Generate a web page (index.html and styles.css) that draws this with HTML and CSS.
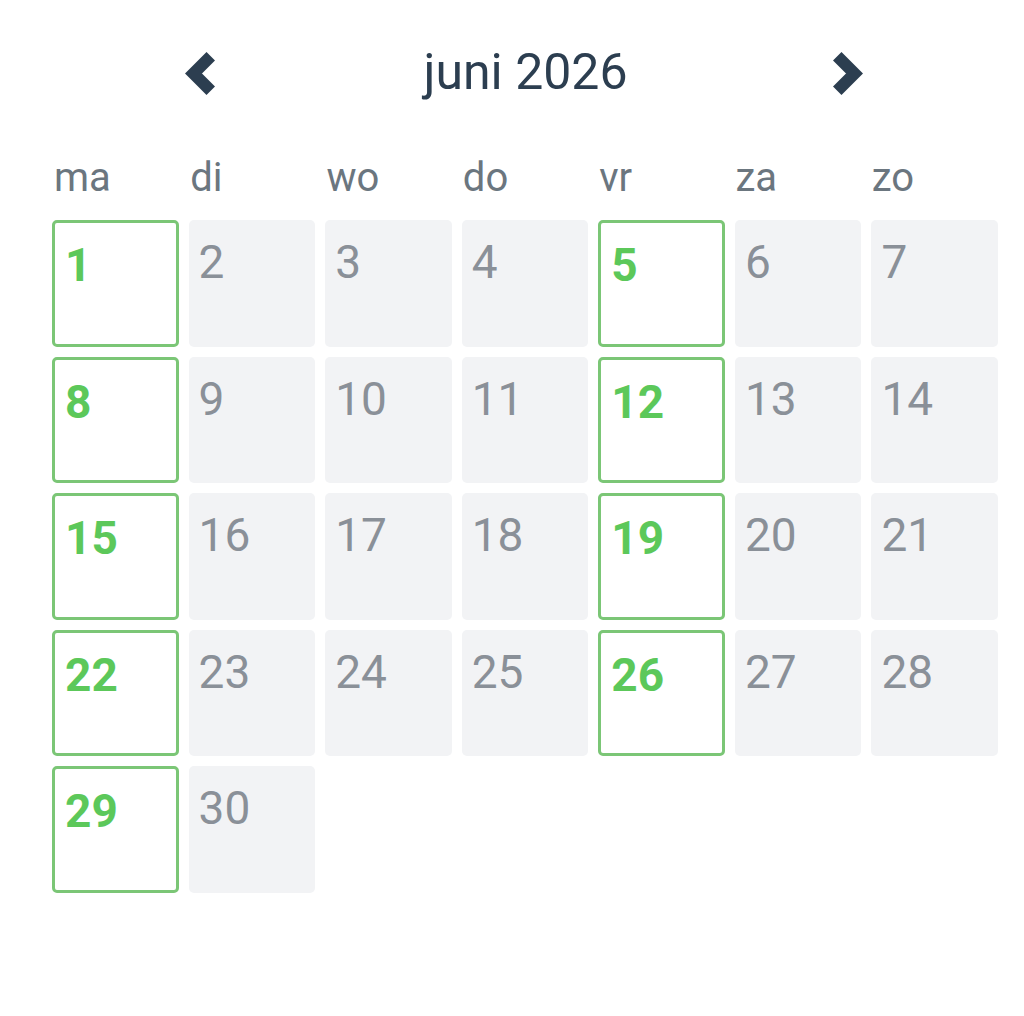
FILE: index.html
```html
<!DOCTYPE html>
<html lang="nl">
<head>
<meta charset="utf-8">
<title>juni 2026</title>
<link rel="stylesheet" href="styles.css">
</head>
<body>
<div class="calendar">
  <div class="header">
    <button class="nav" aria-label="vorige maand">
      <svg width="30" height="43" viewBox="0 0 30 43"><polyline points="25.75,4.25 8.5,21.5 25.75,38.75" fill="none" stroke="#2c3e50" stroke-width="12" stroke-linecap="butt" stroke-linejoin="miter"/></svg>
    </button>
    <div class="title">juni 2026</div>
    <button class="nav" aria-label="volgende maand">
      <svg width="30" height="43" viewBox="0 0 30 43"><polyline points="4.25,4.25 21.5,21.5 4.25,38.75" fill="none" stroke="#2c3e50" stroke-width="12" stroke-linecap="butt" stroke-linejoin="miter"/></svg>
    </button>
  </div>
  <div class="weekdays">
    <div>ma</div><div>di</div><div>wo</div><div>do</div><div>vr</div><div>za</div><div>zo</div>
  </div>
  <div class="days">
    <div class="day open">1</div><div class="day">2</div><div class="day">3</div><div class="day">4</div><div class="day open">5</div><div class="day">6</div><div class="day">7</div>
    <div class="day open">8</div><div class="day">9</div><div class="day">10</div><div class="day">11</div><div class="day open">12</div><div class="day">13</div><div class="day">14</div>
    <div class="day open">15</div><div class="day">16</div><div class="day">17</div><div class="day">18</div><div class="day open">19</div><div class="day">20</div><div class="day">21</div>
    <div class="day open">22</div><div class="day">23</div><div class="day">24</div><div class="day">25</div><div class="day open">26</div><div class="day">27</div><div class="day">28</div>
    <div class="day open">29</div><div class="day">30</div>
  </div>
</div>
</body>
</html>
```
FILE: styles.css
```css
html, body {
  margin: 0;
  padding: 0;
  background: #ffffff;
}
body {
  font-family: Roboto, "Noto Sans", "Liberation Sans", sans-serif;
}
.calendar {
  width: 946px;
  padding: 46px 0 0 52px;
}
.header {
  display: flex;
  align-items: center;
  justify-content: space-between;
  padding: 0 135px 0 133px;
  height: 51px;
}
.nav {
  border: 0;
  background: none;
  padding: 0;
  margin-top: 4px;
  width: 30px;
  height: 43px;
  display: flex;
}
.title {
  font-size: 50px;
  line-height: 1;
  color: #2c3e50;
  font-weight: 400;
  padding-left: 3px;
}
.weekdays {
  display: grid;
  grid-template-columns: repeat(7, 1fr);
  column-gap: 10px;
  margin-top: 61px;
  padding-left: 2px;
  font-size: 40px;
  line-height: 1;
  color: #6b767f;
}
.days {
  display: grid;
  grid-template-columns: repeat(7, 1fr);
  gap: 10px;
  margin-top: 22px;
}
.day {
  box-sizing: border-box;
  aspect-ratio: 1 / 1;
  background: #f2f3f5;
  border-radius: 5px;
  padding: 19px 10px 0 10px;
  font-size: 46px;
  line-height: 1;
  color: #8a9098;
}
.day.open {
  background: #ffffff;
  border: 3px solid #7bc676;
  color: #5cc85a;
  font-weight: 700;
}
```
